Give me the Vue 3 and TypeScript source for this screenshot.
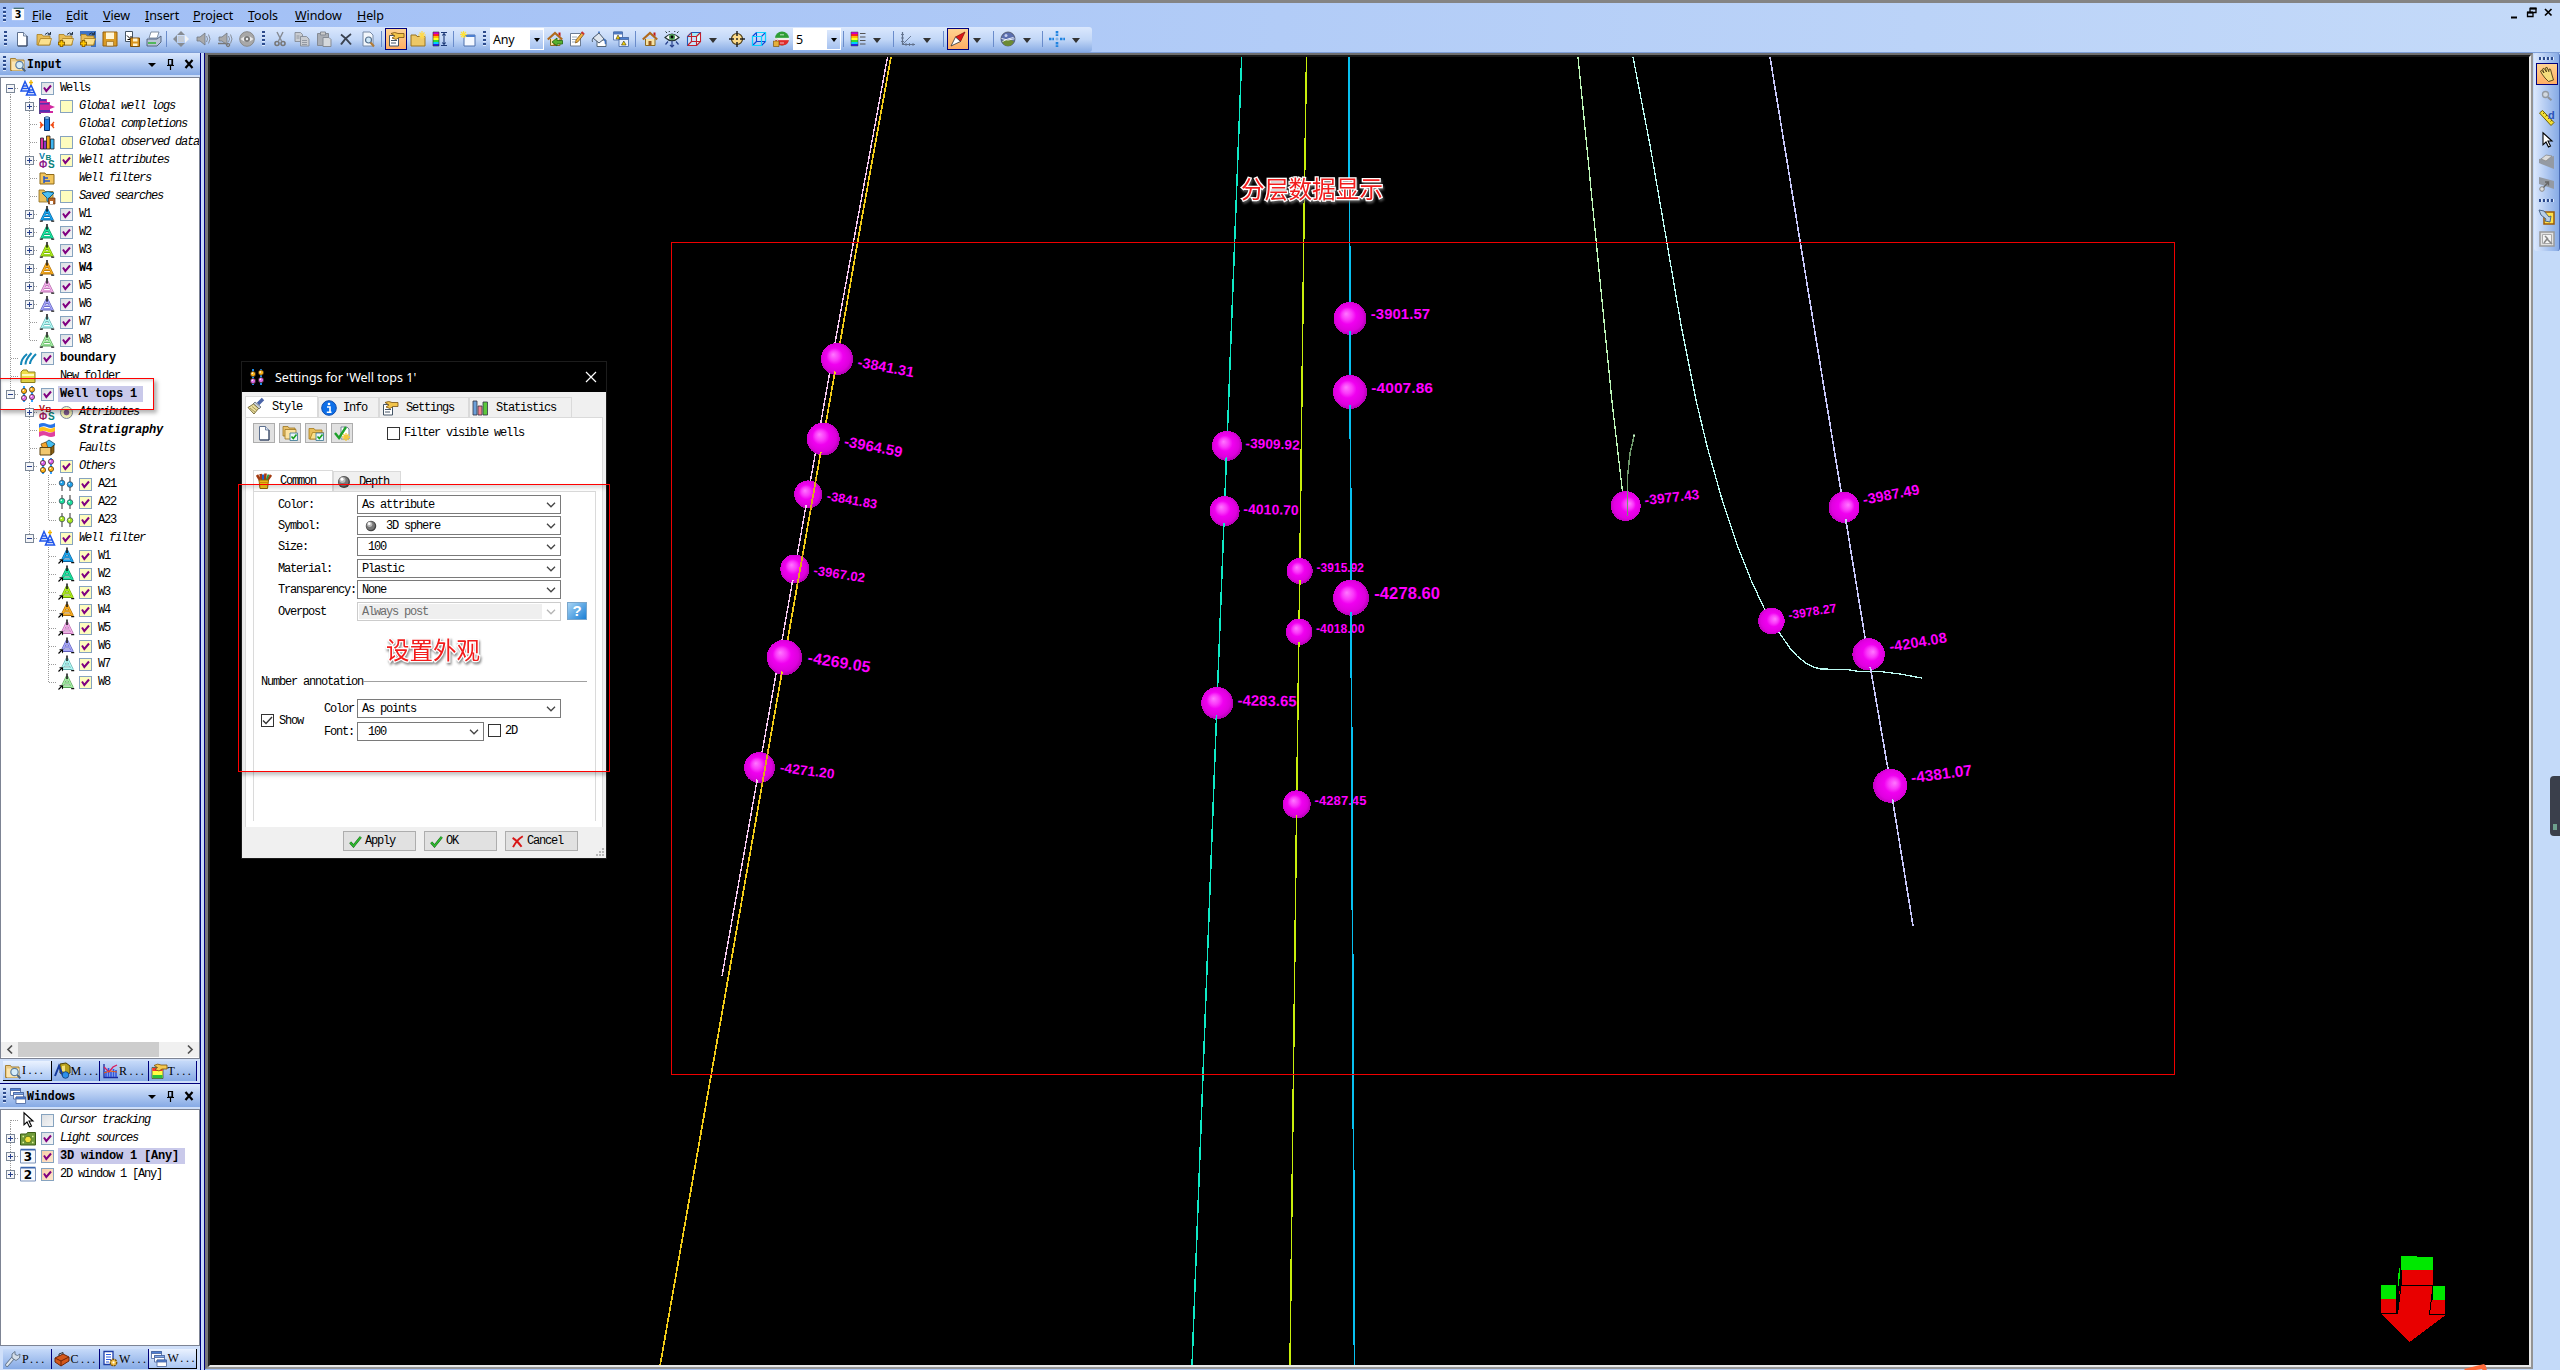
<script setup lang="ts">
interface ToolItem {
  kind: 'icon' | 'sep' | 'grip' | 'drop' | 'combo' | 'gap'
  icon?: string
  w: number
  on?: boolean
  text?: string
}
interface TreeNode {
  label: string
  icon: string
  box?: 'grey' | 'yellow' | 'peach' | 'radio'
  checked?: boolean
  exp?: '+' | '-'
  style?: string
  selected?: boolean
  children?: TreeNode[]
}
interface Row extends TreeNode {
  depth: number
  guides: string[]
}

const rig = (c: string, d: string) =>
  `<path d="M8 3L2.300 14.500M8 3l5.700 11.500" stroke="${d}" stroke-width="2.400" fill="none"/><path d="M6 6.800h4M4.800 9.900h6.400M3 13.200h10" stroke="${d}" stroke-width="2.400"/><path d="M8 3L2.500 14.200M8 3l5.500 11.200" stroke="${c}" stroke-width="1.300" fill="none"/><path d="M6 6.500h4M4.800 9.600h6.400M3.300 12.900h9.400" stroke="${c}" stroke-width="1.400"/><path d="M8 0v5.500" stroke="#111" stroke-width="1.500"/><path d="M.8 15.200h3M12.200 15.200h3" stroke="#111" stroke-width="1.300"/>`
const link = `<path d="M.5 15.500L4 12M1.500 11.800h3v3" stroke="#000" stroke-width="1.100" fill="none"/>`
const rigLink = (c: string, d: string) => `<g transform="translate(1 -.5)">${rig(c, d)}</g><path d="M0 11h4.500v5H0z" fill="#fff"/>${link}`
const pins = (c: string) =>
  `<path d="M4 1v14M12 1v14" stroke="#777" stroke-width="1.500"/><circle cx="4" cy="7" r="2.800" fill="${c}" stroke="#345" stroke-width=".7"/><circle cx="12" cy="8.500" r="2.800" fill="${c}" stroke="#345" stroke-width=".7"/><circle cx="3.300" cy="6.200" r=".8" fill="#fff"/><circle cx="11.300" cy="7.700" r=".8" fill="#fff"/>`
const tops = (a: string, b: string) =>
  `<path d="M4 0v16M12 0v16" stroke="#29f" stroke-width="1.800"/><g stroke="#321" stroke-width=".7"><circle cx="4" cy="5" r="2.600" fill="${a}"/><circle cx="12" cy="3.600" r="2.600" fill="${a}"/><circle cx="4" cy="12" r="2.600" fill="${b}"/><circle cx="12" cy="11" r="2.600" fill="${b}"/></g><g fill="#fff"><circle cx="3.300" cy="4.300" r=".8"/><circle cx="11.300" cy="3" r=".8"/><circle cx="3.300" cy="11.300" r=".8"/><circle cx="11.300" cy="10.300" r=".8"/></g>`
const folder = `<path d="M1 3.500h5l1 1.500h7v9H1z" fill="#e8bd57" stroke="#a77c1c" stroke-width=".8"/><path d="M2 14l2.500-6.500H15.500L13.500 14z" fill="#fbe08c" stroke="#a77c1c" stroke-width=".8"/>`
const page = `<path d="M3.500 1.500h6l3.500 3.500v10h-9.500z" fill="#fff" stroke="#5c6f8e"/><path d="M9.500 1.500V5H13" fill="#d8e2f2" stroke="#5c6f8e" stroke-width=".8"/><path d="M13 5v10H4" stroke="#34435f" fill="none"/>`
const plus = `<path d="M3.500 9v7M0 12.500h7" stroke="#7a5200" stroke-width="3.400"/><path d="M3.500 9.700v5.600M.8 12.500h5.400" stroke="#ffc800" stroke-width="1.800"/>`
const arc = `<path d="M9 3.500Q11.500.5 14 3M14.500 1v2.700h-2.700" fill="none" stroke="#234" stroke-width="1"/>`
const home = `<path d="M3.500 8v6.500h9.500V8" fill="#f6e2a4" stroke="#8a6a20"/><path d="M.8 8.500L8 2l7.200 6.500" fill="none" stroke="#b06a1c" stroke-width="2.200"/><path d="M11.500 1.500h2v4l-2-1.800z" fill="#c01818"/><path d="M6.500 10h3v4.500h-3z" fill="#9a5a1c"/>`
const speaker = `<path d="M2 6h3l5-4v12L5 10H2z" fill="#aaa" stroke="#6f7680" stroke-width=".8"/><path d="M11.500 5q2 3 0 6M13.500 3.500q3 4.500 0 9" fill="none" stroke="#80868e" stroke-width=".9"/>`
const sphere = `<circle cx="8" cy="8" r="6" fill="#444"/><circle cx="7.500" cy="7.500" r="5" fill="#777"/><circle cx="6.500" cy="6" r="3" fill="#bbb"/><circle cx="6" cy="5.300" r="1.500" fill="#fff"/>`
const attrs = (a: string, b: string, c: string) =>
  `<g font-family="Liberation Sans" font-weight="bold"><text x="0" y="6.800" font-size="9" fill="${a}">V</text><text x="6.500" y="7.500" font-size="8" fill="${b}">B</text><text x="0" y="15.800" font-size="10" fill="${c}">Φ</text><text x="9" y="15.800" font-size="10" fill="#087f7a">S</text></g>`
const windows3 = `<g stroke="#46629c" stroke-width=".8"><path d="M.5.5h10v7H.5z" fill="#fff"/><path d="M.5.500h10v2H.5z" fill="#4d7fd6"/><path d="M3.500 4.500h10v6.500h-10z" fill="#fff"/><path d="M3.500 4.500h10v2h-10z" fill="#7fa6e6"/><path d="M6 9h9.500v6.500H6z" fill="#fff"/><path d="M6 9h9.500v2H6z" fill="#4d7fd6"/></g>`
const spectrum = (x: number, w: number) =>
  ['#c0c', '#f22', '#fb0', '#ff2', '#3d3', '#0cf', '#22e'].map((c, i) => `<rect x="${x}" y="${1 + i * 2}" width="${w}" height="2" fill="${c}"/>`).join('')
const props = `<path d="M1.500 4.500h9v10.500h-9z" fill="#fff" stroke="#456"/><path d="M3 9.500h6M3 12h5" stroke="#456"/><path d="M3 2.500q4-2 7 0h6v4h-5l-3 2-4-1.500 3-2z" fill="#f2c44a" stroke="#7a5010" stroke-width=".8"/>`
const okShield = `<path d="M8 8h7.500v7.500H8z" fill="#e8f4fa" stroke="#48809a" stroke-width=".9"/><path d="M9.500 11.500l1.800 2L14.500 9.500" stroke="#19a01d" stroke-width="1.600" fill="none"/>`
const box = (n: string) => `<path d="M.5 2h15v13H.5z" fill="#f6f9fe" stroke="#7d93bb"/><path d="M.5 1.500h15" stroke="#3a66b0" stroke-width="1.500"/><text x="8" y="13" text-anchor="middle" font-family="DejaVu Sans" font-weight="bold" font-size="12" fill="#000">${n}</text>`
const cube = (c: string) => `<path d="M1.500 5.500h9v9h-9zM5.500 1.500h9v9h-9zM1.500 5.500l4-4M10.500 5.500l4-4M1.500 14.500l4-4M10.500 14.500l4-4" fill="none" stroke="${c}" stroke-width="1.100"/>`

const icons: Record<string, string> = {
  app: `<path d="M1 2h14v13H1z" fill="#fbfbfb"/><path d="M3 1.500h12" stroke="#47706f" stroke-width="1.500"/><text x="8" y="13" text-anchor="middle" font-family="DejaVu Sans" font-weight="bold" font-size="11">3</text>`,
  page,
  folder: folder + arc,
  folderPlus: folder + arc + plus,
  folderBlue: `<path d="M0 0h16v5H0zM11 5h5v11h-5z" fill="#3e73c5"/>` + folder + arc + plus,
  save: `<path d="M1 1h14v14H1z" fill="#d99a25" stroke="#935f0c"/><path d="M4 1.500h8V8H4z" fill="#fff6d8"/><path d="M4.500 10.500h7V15h-7z" fill="#f4e6c0" stroke="#935f0c" stroke-width=".6"/>`,
  exportIcon: `<path d="M1.500.5h7v10h-7z" fill="#fff" stroke="#456"/><path d="M3 4.500l4 4M7 5v3.500H3.500" stroke="#000" fill="none"/><path d="M6.500 7h9v8.500h-9z" fill="#d9941e" stroke="#7c4d07"/><path d="M9 7.500h4.500v3H9zM9 12.500h4.500V15H9z" fill="#fff3d0"/>`,
  print: `<path d="M5 1h8l-2 6H3z" fill="#fff" stroke="#68788e" stroke-width=".8"/><path d="M1 8h10l4-3v6l-4 4H1z" fill="#b9c5d6" stroke="#4a5a74" stroke-width=".9"/><path d="M2 12h8" stroke="#2fb233" stroke-width="1.500"/>`,
  arrows: `<path d="M8 0l4 4H4zM8 16l4-4H4zM0 8l4-4v8z" fill="#868b92"/><path d="M16 8l-4-4v8z" fill="#f1f3f5"/><path d="M5 5h6v6H5z" fill="#c3cbd6"/>`,
  speaker,
  speaker2: speaker + `<path d="M1 12.500h8M11 12.500a1.500 1.500 0 1 0 .1 0" stroke="#777" stroke-width="1.400" fill="none"/>`,
  disc: `<circle cx="8" cy="8" r="7.300" fill="#a8a8a8" stroke="#888"/><path d="M1.500 8Q8 2 14.500 8 8 14 1.500 8z" fill="#e8e8e8"/><circle cx="8" cy="8" r="3" fill="#777"/><circle cx="8" cy="8" r="1.200" fill="#eee"/>`,
  cut: `<path d="M5 1l4.500 9M11 1L6.500 10" stroke="#858a92" stroke-width="1.400"/><g fill="none" stroke="#777" stroke-width="1.600"><circle cx="5" cy="12.500" r="2"/><circle cx="11" cy="12.500" r="2"/></g>`,
  copy: `<g fill="#c9ccd1" stroke="#858b95" stroke-width=".9"><path d="M1 1.500h5.500l2 2v7H1z"/><path d="M6.500 5.500h6l2.500 2.500v7H6.500z"/></g><path d="M8 9.500h5M8 11.500h5M8 13.500h5M2.500 5h3M2.500 7h3" stroke="#858b95" stroke-width=".8"/>`,
  paste: `<path d="M1.500 2.500h11v12h-11z" fill="#a9adb4" stroke="#858b95"/><path d="M4.500 1h5v3h-5z" fill="#ccc" stroke="#858b95"/><path d="M7 6.500h6l2 2v7H7z" fill="#d5d8dc" stroke="#858b95"/>`,
  del: `<path d="M3 3.500Q8 7 13 13.500M13 3Q7 7 3 13.500" stroke="#3a4250" stroke-width="1.900" fill="none"/>`,
  preview: `<path d="M3 1h7l3 3v11H3z" fill="#f2f6fb" stroke="#778aa6"/><circle cx="8.500" cy="9" r="3" fill="#cfe8f8" stroke="#55708e" stroke-width="1.200"/><path d="M10.500 11.500l3.500 4" stroke="#b07a36" stroke-width="2"/>`,
  props,
  folderStar: `<path d="M1 4h5l1 1.500h8V15H1z" fill="#edc866" stroke="#9a7420"/><path d="M12 0v8M8 4h8M9.500 1.500l5 5M14.500 1.500l-5 5" stroke="#ffd94a" stroke-width="1.200"/>`,
  colorbar: spectrum(1, 6) + `<path d="M1 1h6v14H1z" fill="none" stroke="#333" stroke-width=".6"/><path d="M12 2v12M9 1.500h6M9 14.500h6M10.300 4.500L12 2.500l1.700 2M10.300 11.500l1.700 2 1.700-2" stroke="#1d3a78" fill="none" stroke-width="1.100"/>`,
  newWindow: `<path d="M4 4h11v11H4z" fill="#f4f8ff" stroke="#4f70ac"/><path d="M4 4h11v2H4z" fill="#4c7fd0"/><path d="M3.500 0v7M0 3.500h7M1 1l5 5M6 1L1 6" stroke="#ffe23d" stroke-width="1.200"/>`,
  homeBack: home + `<path d="M5 11l5-4v2.500h5.500v3.500H10V15z" fill="#58b02e" stroke="#22650f" stroke-width=".8"/>`,
  edit: `<path d="M1.500 2.500h10V15h-10z" fill="#fff" stroke="#6d7c93"/><path d="M3 6h5M3 8.500h4M3 11h3" stroke="#9ab"/><path d="M6.500 12l.5-3L13 1.500l2 1.800L9 10.800z" fill="#f1b648" stroke="#7c5313" stroke-width=".8"/><path d="M12.500 1l2.500 2.200" stroke="#c33" stroke-width="2"/>`,
  bucket: `<path d="M6 9h9v6.500H6z" fill="#fff" stroke="#567"/><path d="M2 7l6-5 5 6-5 4z" fill="#dfe6ee" stroke="#4b5a6e"/><path d="M8 2V.5M13 8q2 2 1.500 5" stroke="#3b6fc0" stroke-width="1.600" fill="none"/><path d="M2 7q-1.500 2-.5 4" stroke="#567" fill="none"/>`,
  paneCopy: `<g stroke="#4f70ac" stroke-width=".9"><path d="M.5 1h9v8h-9z" fill="#fff"/><path d="M.5 1h9v2h-9z" fill="#4c7fd0"/><path d="M6 6.500h9.500v9H6z" fill="#eaf0fa"/><path d="M6 6.500h9.500v2H6z" fill="#4c7fd0"/></g><path d="M3 8l2-4 2 4zM8.500 14l2.300-4 2.300 4z" fill="#ffd800" stroke="#332" stroke-width=".6"/>`,
  home,
  eye: `<path d="M1 6.500Q8-.5 15 6.500 8 13 1 6.500z" fill="#fff" stroke="#233" stroke-width="1.100"/><circle cx="8" cy="6" r="3" fill="#4a9b52"/><circle cx="8" cy="6" r="1.400" fill="#000"/><path d="M3 2L1.500.500M13 2l1.500-1.500M5.500 1L5 0M10.500 1L11 0" stroke="#233"/><path d="M8 10v6M4 10.500l-2.500 3M12 10.500l2.500 3M6 14l2 2 2-2" stroke="#27408b" fill="none" stroke-width="1.200"/>`,
  cubeRed: `<path d="M1.500 5.500l4-4h9l-4 4z" fill="#a6ecf7"/><path d="M1.500 5.500h9v9h-9z" fill="#c8e4fb"/><path d="M10.500 5.500l4-4v9l-4 4z" fill="#dff"/>` + cube('#c2202c') + `<path d="M5.500 1.500h9M1.500 5.500l4-4M1.500 5.500v9" stroke="#1d5fbb" fill="none"/>`,
  target: `<circle cx="8" cy="8" r="5.500" fill="#fbd98a" stroke="#4b3a12" stroke-width="1.200"/><path d="M8 0v5M8 11v5M0 8h5M11 8h5" stroke="#222" stroke-width="1.500"/><circle cx="8" cy="8" r="1" fill="#222"/>`,
  cubeCyan: cube('#0a46d8') + `<path d="M5.500 1.500h9v9M1.500 14.500v-9h9v9z" stroke="#0cd3ff" stroke-width="1.100" fill="none"/>`,
  globeLock: `<circle cx="9" cy="7.500" r="7" fill="#2e9e36"/><path d="M2 8h14q-.5 6.500-7 6.500T2 8z" fill="#df2b2b"/><path d="M2 7.300h14v1.400H2zM7 3.800h4M7 12h4" stroke="#fff" stroke-width=".7" fill="#fff"/><path d="M.5 10h5.500v5.500H.5z" fill="#e5b03a" stroke="#7c5510" stroke-width=".7"/><path d="M1.700 10V8.500q1.500-2 3 0V10" stroke="#ccc" fill="none"/>`,
  legend: spectrum(1, 7) + `<path d="M1 1h7v14H1z" fill="none" stroke="#444" stroke-width=".5"/><path d="M10 2.500h5.500M10 6h5.500M10 9.500h5.500M10 13h5.500" stroke="#555" stroke-width="1.200"/>`,
  axes: `<path d="M2.500 1v12.500H15" fill="none" stroke="#62728c" stroke-width="1.200"/><path d="M2.500 13.500L11 5M1 3.500h3M1 7h3M1 10.500h3M6 12v3M9.500 12v3M13 12v3" stroke="#62728c" stroke-width=".9"/>`,
  compass: `<path d="M15 1L5.500 6l5 4.500z" fill="#e01717" stroke="#7a0a0a" stroke-width=".7"/><path d="M1 15l4.500-9 5 4.500z" fill="#fff" stroke="#333" stroke-width=".8"/>`,
  globe: `<circle cx="8" cy="8" r="7" fill="#5b6fb0" stroke="#4a4f60" stroke-width=".8"/><path d="M2 10q5-2.500 12 0-1.500 5-6 5t-6-5z" fill="#6c8a33"/><path d="M1.500 7.500q6 3 13 .3M2.500 10.500q5-3 11-4" stroke="#e9eef8" fill="none"/><circle cx="6" cy="4.500" r="1.500" fill="#c5cff0"/>`,
  cross: `<path d="M8 0v5M8 11v5M0 8h5M11 8h5" stroke="#1f83e0" stroke-width="2.600" stroke-dasharray="2.500 .8"/><path d="M6.500 8h3M8 6.500v3" stroke="#6ea6df"/>`,
  wells: `<g fill="none" stroke="#1f55ea" stroke-width="1.500"><path d="M5 1.500L1 11h8.500zM3.500 6h3M2.500 8.500h5"/><path d="M11 5L6.500 15h9zM9.500 10h3.500M8.500 12.500h6"/></g><path d="M11 0v5M9 2.500h4" stroke="#f2b500" stroke-width="1.300"/>`,
  logs: `<path d="M1 0v16" stroke="#206" stroke-width="1.500"/><path d="M1 1h7v3h3v3l5 2-5 2v2h3v2H1z" fill="#d128a0"/><path d="M1 1h6v2H1zM1 5h9v1.500H1zM1 12h10v2.500H1z" fill="#5530b0"/>`,
  completions: `<path d="M5.500 1.500h5v13h-5z" fill="#1b7be0" stroke="#08306a"/><ellipse cx="8" cy="2" rx="2.500" ry="1.300" fill="#9cd2ff" stroke="#08306a" stroke-width=".7"/><path d="M4.500 9H1M1 6l2.500 3L1 12M11.500 9H15M15 6l-2.500 3 2.500 3" stroke="#f04a12" stroke-width="1.300" fill="none"/>`,
  bars: `<g stroke="#222" stroke-width=".8"><path d="M1.500 4h3v11h-3z" fill="#e0309f"/><path d="M4.500 7h3v8h-3z" fill="#8b30c8"/><path d="M7.500 2h3.500v13H7.500z" fill="#f2a21b"/><path d="M11.500 5h3.500v10h-3.500z" fill="#3fb6f2"/></g>`,
  attrs: attrs('#0a7fae', '#087f7a', '#8a1a8a'),
  attrsRed: attrs('#a01818', '#8a1020', '#9b1a5a'),
  filters: `<path d="M1 3h5l1 1.500h8V14H1z" fill="#f2c55c" stroke="#8d6a1c"/><path d="M5 6v7M5 8h4M5 11h6" stroke="#2456c8" stroke-width="1.500"/>`,
  searches: `<path d="M0 2h5l1 1.500h8V14H0z" fill="#eac05c" stroke="#8d6a1c" stroke-width=".8"/><path d="M3 5q5.500-3 12 0l-5 5v4l-2-1v-3z" fill="#4cc0f4" stroke="#10608e"/><path d="M9.500 10H16v6H9.500z" fill="#b8682a" stroke="#5b2f0c" stroke-width=".7"/><path d="M11 13h3v3h-3z" fill="#fff"/>`,
  boundary: `<path d="M1 15q0-6 6-11M5.500 14.500q0-5 6-11.500M10 14q0-4 6-10" stroke="#1387b8" stroke-width="2" fill="none"/>`,
  newFolder: `<path d="M1 4l2-2h4l1 2h7v10.500H1z" fill="#efdf4b" stroke="#8d801c"/><path d="M2 6h12v2H2z" fill="#fffbc0"/>`,
  tops: tops('#ffb51a', '#e06ee8'),
  topsAlt: tops('#d860e8', '#ffb51a'),
  strat: `<path d="M0 2q4-2 8 0t8-1v4q-4 2-8 0T0 6z" fill="#2874e8"/><path d="M0 6q4-2 8 0t8-1v4.500q-4 2-8 0t-8 1z" fill="#ffc21a"/><path d="M0 10q4-2 8 0t8-1v5q-4 2-8 0t-8 1z" fill="#e040a0"/>`,
  faults: `<path d="M3 5l7-5 6 4-4 5-8 1z" fill="#43bdf0" stroke="#0e4a6c" stroke-width=".8"/><path d="M2 4l5-2 2 6-5 1z" fill="#f5a52c" stroke="#6a430c" stroke-width=".7"/><path d="M1 7.500h11V15H1z" fill="#f1c870" stroke="#5c420f"/><path d="M12 7.500l3-2.500v7.500L12 15z" fill="#8a6014" stroke="#3c2a05" stroke-width=".7"/>`,
  cursor: `<path d="M4 .8v12l3-2.800 2.500 5 2-1L9 9h4z" fill="#fff" stroke="#000" stroke-width="1.100"/>`,
  light: `<path d="M.5 4h6l1-1.500h8V15H.5z" fill="#6f9a3a" stroke="#3c5d14"/><circle cx="8" cy="9.500" r="3.300" fill="#f4e23c" stroke="#4e6a12" stroke-width=".8"/><path d="M2.500 6.500h1.500M12 6.500h1.500M2.500 12.500h1.500M12 12.500h1.500" stroke="#e7f29a" stroke-width="1.300"/>`,
  box3: box('3'),
  box2: box('2'),
  panelInput: `<path d="M.5 2.500h5l1 1.500h7.500v10.500H.5z" fill="#eccb85" stroke="#a58136"/><path d="M2 5.500h12v9H2z" fill="#fbe6b2"/><circle cx="9.500" cy="9" r="3.700" fill="#d4ecfa" stroke="#5c7ea0" stroke-width="1.200"/><path d="M12.300 12l3 3.300" stroke="#4c6480" stroke-width="2"/>`,
  panelWindows: windows3,
  models: `<path d="M6 1l6-1 4 3v7l-5 2-5-2z" fill="#b7a01c" stroke="#4b4108"/><path d="M8 3l3-.5V9L8 8z" fill="#f4e27a"/><path d="M1 13L5 3l4 10" stroke="#153a9c" stroke-width="2" fill="none"/><circle cx="11.500" cy="12" r="3.300" fill="#2e8fe8" stroke="#0b3a78" stroke-width=".8"/>`,
  results: `<path d="M2 1v13.500H16" stroke="#1b2a9c" stroke-width="1.300" fill="none"/><path d="M4 14V8M6.500 14V5M9 14V9M11.500 14V6M14 14V7" stroke="#3355dd" stroke-width="1.600"/><path d="M2 4l5 5 4-5 4-2" stroke="#d81c5c" stroke-width="1.300" fill="none"/><path d="M2 10l6-2 7 1" stroke="#e85a10" fill="none"/>`,
  templates: `<path d="M1 4.500h11V15.500H1z" fill="#ff4" stroke="#333" stroke-width=".7"/><path d="M1.400 5h10.200v3H1.400z" fill="#f33"/><path d="M1.400 12h10.200v3.200H1.400z" fill="#2cc13a"/><path d="M3 2.500q4-2.500 7-.5h6v4h-5l-3 2-4-1.500 2.500-2z" fill="#f4c850" stroke="#7a5010" stroke-width=".8"/>`,
  wrench: `<path d="M2 14l6-7" stroke="#5f7186" stroke-width="3.600" stroke-linecap="round"/><path d="M2 14l6-7" stroke="#dfe7ef" stroke-width="2" stroke-linecap="round"/><path d="M7 7V3l3-2.500v3l2.500 1 2.500-1.500-.5 4-3.500 2.500z" fill="#d3dde8" stroke="#5f7186" stroke-width=".9"/>`,
  toolbox: `<path d="M1 7l8-4 6 3v4l-8 5-6-4z" fill="#d4581c" stroke="#702406"/><path d="M1 7l6 3 8-4M7 10v5" stroke="#702406" fill="none"/><path d="M5 5V3l4-1.500V3" stroke="#333" fill="none"/>`,
  workflow: `<path d="M2 .5h9v13H2z" fill="#fff" stroke="#1c3da6" stroke-width="1.300"/><path d="M4 3.500h5M4 6h5M4 8.500h5M4 11h3" stroke="#2a5be0" stroke-width="1.200"/><circle cx="11.500" cy="11.500" r="3.200" fill="#f6c44a" stroke="#7d560c" stroke-width="1.400" stroke-dasharray="2 .7"/><circle cx="11.500" cy="11.500" r="1" fill="#fff"/>`,
  brush: `<path d="M15 0l-5 5" stroke="#4a64a8" stroke-width="3.400"/><path d="M7 3l6 5-2 2-6-5z" fill="#c5ccd6" stroke="#5c6674" stroke-width=".8"/><path d="M5.500 5L0 8.500l6 6.500 4.500-5.500z" fill="#ecdfa0" stroke="#6e6330" stroke-width=".9"/><path d="M2 9l5 4M4 7.500l5 4" stroke="#87793a" stroke-width=".7"/>`,
  info: `<circle cx="8" cy="8" r="7.300" fill="#0d6fe8" stroke="#0b4cb0"/><circle cx="8" cy="4" r="1.300" fill="#fff"/><path d="M6 7h3v5M5.800 12.300h4.700" stroke="#fff" stroke-width="1.600" fill="none"/>`,
  stats: `<g stroke="#334" stroke-width=".8"><path d="M1 1h4v14H1z" fill="#6b9fd8"/><path d="M6 6h4v9H6z" fill="#f0808c"/><path d="M11 2h4.500v13H11z" fill="#5cc83c"/></g>`,
  foldersOk: `<path d="M1 1.500h5l1 1.500h6v8H1z" fill="#e9c068" stroke="#9a7420" stroke-width=".8"/><path d="M3 4.500h11V14H3z" fill="#fbe2a0" stroke="#9a7420" stroke-width=".8"/>` + okShield,
  folderOk: folder + okShield,
  checkStar: `<path d="M7 2h6l2 2v10H7z" fill="#fff" stroke="#789"/><path d="M1 8l4 5L12 2" stroke="#1da02a" stroke-width="2.400" fill="none"/><path d="M12 8v8M8 12h8M9.300 9.300l5.400 5.400M14.700 9.300l-5.400 5.400" stroke="#f4c83c" stroke-width="1.300"/>`,
  common: `<path d="M4 7L1 2M6 7L4.500 1M9 7l.5-6.500M11.500 7L15 2" stroke="#a33a10" stroke-width="2.600"/><path d="M7 7V1.500" stroke="#2060c8" stroke-width="2"/><path d="M10.500 7L12.500 1.500" stroke="#289a3c" stroke-width="1.800"/><path d="M3 7h9.500l-1 8.500H4z" fill="#f4c61e" stroke="#8a5c05"/><path d="M3.300 9.500h8.800" stroke="#c98a08" stroke-width="1.500"/>`,
  sphere,
  tick: `<path d="M1.500 9l4 4.500L14.500 2.500" stroke="#14641a" stroke-width="3.200" fill="none"/><path d="M1.500 9l4 4.500L14.500 2.500" stroke="#2fbb2f" stroke-width="2" fill="none"/>`,
  redx: `<path d="M2 3.500Q8 7 13 14.500M14.500 1.500Q7 6 2.500 15" stroke="#d81717" stroke-width="2.400" fill="none"/>`,
  hand: `<path d="M3 8L1.500 5l1.300-.8L5 7 3.500 3l1.400-.8L7.500 6 6.500 1.800 8 1.300 9.800 5.700 10 3l1.500.3L13 9l1.500 5-5 1.500L6 12z" fill="#f5dd7c" stroke="#4e3d14" stroke-width=".9"/>`,
  zoomGrey: `<circle cx="6.500" cy="6.500" r="3" fill="#d2d8df" stroke="#9299a3" stroke-width="1.300"/><path d="M9 9.200l3.500 3" stroke="#8c9199" stroke-width="2"/>`,
  ruler: `<path d="M.5 3l3-2.500L15 12.500l-3 3z" fill="#f6df35" stroke="#6b5e08"/><path d="M4 4l1.500-1.500M6.500 6.500L8 5M9 9l1.500-1.500M11.500 11.500L13 10" stroke="#6b5e08"/><text x="9" y="8.500" font-family="Liberation Sans" font-weight="bold" font-size="11" fill="#2b52b8">d</text>`,
  planeGrey: `<path d="M0 5l15-3v13L0 9z" fill="#949aa3"/><path d="M2 5l5-4 6 1-6 5z" fill="#dcdcdc" stroke="#8a8a8a" stroke-width=".8"/>`,
  planeGrey2: `<path d="M0 1l15 4v8L0 8z" fill="#949aa3"/><circle cx="3" cy="13" r="2.300" fill="#ddd" stroke="#888"/><path d="M4.500 11.500L9 6.500M6 6h3.500v3.500" stroke="#666" stroke-width="1.300" fill="none"/>`,
  wellEdit: `<path d="M5 3h10v12H5z" fill="#ffe04a" stroke="#9a5a08" stroke-width="1.500"/><path d="M0 1l5 1 5 6 2-1-1 6-5-1 1-2-5-4z" fill="#b9cfe6" stroke="#3d5a80" stroke-width=".9"/>`,
  frameGrey: `<path d="M1 1h14v14H1z" fill="#e2e2e2" stroke="#999" stroke-width="1.500"/><path d="M3.500 3.500h9v9h-9z" fill="#f4f4f4" stroke="#aaa"/><path d="M5 12l3-4 5 5M6 5l3 3" stroke="#888" stroke-width="1.500" fill="none"/>`,
}
const rigColors: [string, string][] = [
  ['#1aa8f0', '#0a5f9c'], ['#1ce8a4', '#0a8a60'], ['#b0f01c', '#6a9a08'], ['#fab022', '#a86a08'],
  ['#f4b0ea', '#b068a8'], ['#a8a8fa', '#5c5cb8'], ['#b4faf6', '#5ca8a8'], ['#a8f0a8', '#58a058'],
]
rigColors.forEach(([c, d], i) => {
  icons['rig' + i] = rig(c, d)
  icons['rigLink' + i] = rigLink(c, d)
})
;['#1f9fe8', '#1edc9c', '#a8e61c'].forEach((c, i) => (icons['pins' + i] = pins(c)))

const i = (icon: string, on = false): ToolItem => ({ kind: 'icon', icon, w: 22, on })
const k = (kind: ToolItem['kind'], w: number, text?: string): ToolItem => ({ kind, w, text })
const toolbar: ToolItem[] = [
  k('grip', 10.5), i('page'), i('folder'), i('folderPlus'), i('folderBlue'), i('save'), i('exportIcon'), i('print'), k('sep', 5),
  i('arrows'), i('speaker'), i('speaker2'), i('disc'), k('grip', 11), i('cut'), i('copy'), i('paste'), i('del'), i('preview'), k('sep', 6.5),
  i('props', true), i('folderStar'), i('colorbar'), k('sep', 6), i('newWindow'), k('grip', 11), k('combo', 54, 'Any'),
  i('homeBack'), i('edit'), i('bucket'), i('paneCopy'), k('sep', 7), i('home'), i('eye'), i('cubeRed'), k('drop', 15), k('gap', 6),
  i('target'), i('cubeCyan'), i('globeLock'), k('gap', 1), k('combo', 48, '5'), k('sep', 6), i('legend'), k('drop', 16), k('sep', 12),
  i('axes'), k('drop', 15), k('sep', 13), i('compass', true), k('drop', 15), k('sep', 13), i('globe'), k('drop', 15), k('sep', 12), i('cross'), k('drop', 16), k('gap', 8),
]
const menus: [string, string, number][] = [
  ['F', 'ile', 34], ['E', 'dit', 37], ['V', 'iew', 42], ['I', 'nsert', 48], ['P', 'roject', 55], ['T', 'ools', 47], ['W', 'indow', 62], ['H', 'elp', 40],
]

const wellNames = ['W1', 'W2', 'W3', 'W4', 'W5', 'W6', 'W7', 'W8']
const inputTree: TreeNode[] = [
  {
    label: 'Wells', icon: 'wells', box: 'grey', checked: true, exp: '-', children: [
      { label: 'Global well logs', icon: 'logs', box: 'yellow', exp: '+', style: 'it' },
      { label: 'Global completions', icon: 'completions', style: 'it' },
      { label: 'Global observed data', icon: 'bars', box: 'yellow', style: 'it' },
      { label: 'Well attributes', icon: 'attrs', box: 'yellow', checked: true, exp: '+', style: 'it' },
      { label: 'Well filters', icon: 'filters', style: 'it' },
      { label: 'Saved searches', icon: 'searches', box: 'yellow', style: 'it' },
      ...wellNames.map((label, n): TreeNode => ({ label, icon: 'rig' + n, box: 'grey', checked: true, exp: n < 6 ? '+' : undefined, style: n === 3 ? 'bd tight' : '' })),
    ],
  },
  { label: 'boundary', icon: 'boundary', box: 'grey', checked: true, style: 'bd' },
  { label: 'New folder', icon: 'newFolder' },
  {
    label: 'Well tops 1', icon: 'tops', box: 'grey', checked: true, exp: '-', style: 'bd', selected: true, children: [
      { label: 'Attributes', icon: 'attrsRed', box: 'radio', exp: '+', style: 'it' },
      { label: 'Stratigraphy', icon: 'strat', style: 'it bd' },
      { label: 'Faults', icon: 'faults', style: 'it' },
      {
        label: 'Others', icon: 'topsAlt', box: 'yellow', checked: true, exp: '-', style: 'it',
        children: ['A21', 'A22', 'A23'].map((label, n): TreeNode => ({ label, icon: 'pins' + n, box: 'yellow', checked: true })),
      },
      {
        label: 'Well filter', icon: 'wells', box: 'yellow', checked: true, exp: '-', style: 'it',
        children: wellNames.map((label, n): TreeNode => ({ label, icon: 'rigLink' + n, box: 'yellow', checked: true })),
      },
    ],
  },
]
const windowTree: TreeNode[] = [
  { label: 'Cursor tracking', icon: 'cursor', box: 'grey', style: 'it' },
  { label: 'Light sources', icon: 'light', box: 'grey', checked: true, exp: '+', style: 'it' },
  { label: '3D window 1 [Any]', icon: 'box3', box: 'peach', checked: true, exp: '+', style: 'bd', selected: true },
  { label: '2D window 1 [Any]', icon: 'box2', box: 'peach', checked: true, exp: '+' },
]
function flatten(nodes: TreeNode[], depth = 0, parents: string[] = []): Row[] {
  return nodes.flatMap((node, n) => {
    const last = n === nodes.length - 1
    const first = depth === 0 && n === 0
    const own = last ? 'upper' : first ? 'lower' : 'full'
    const row: Row = { ...node, depth, guides: [...parents, own] }
    return [row, ...flatten(node.children ?? [], depth + 1, [...parents, last ? 'none' : 'full'])]
  })
}
const panels = [
  {
    id: 'input', title: 'Input', icon: 'panelInput', rows: flatten(inputTree), scroll: true, active: 0,
    tabs: [['panelInput', 'I...'], ['models', 'M...'], ['results', 'R...'], ['templates', 'T...']],
  },
  {
    id: 'windows', title: 'Windows', icon: 'panelWindows', rows: flatten(windowTree), scroll: false, active: 3,
    tabs: [['wrench', 'P...'], ['toolbox', 'C...'], ['workflow', 'W...'], ['panelWindows', 'W...']],
  },
]

type Pt = [number, number]
interface Path { color: string; pts: Pt[]; width: number }
const paths: Record<string, Path> = {
  w5: { color: '#f4c8ee', width: 1.4, pts: [[887.5, 57], [857.5, 220], [835, 343], [750, 820], [722, 976]] },
  w4: { color: '#f2cc18', width: 1.7, pts: [[891, 57], [861.5, 220], [840, 343], [762.5, 782.6], [660, 1366]] },
  w2: { color: '#0feac6', width: 1.5, pts: [[1241.7, 57], [1235.5, 220], [1227.5, 430], [1217, 703], [1212.6, 820], [1192, 1366]] },
  w3: { color: '#c8ee0c', width: 1.5, pts: [[1306.5, 57], [1304, 220], [1299.9, 564], [1296.8, 790], [1290, 1366]] },
  w1: { color: '#08c0f0', width: 1.8, pts: [[1349, 57], [1349.5, 220], [1351, 580], [1352, 820], [1354.5, 1366]] },
  w8: { color: '#bcf6b8', width: 1.3, pts: [[1578, 57], [1611.8, 400], [1622.4, 491], [1625, 508]] },
  w7: { color: '#bcfaf2', width: 1.3, pts: [[1633, 57], [1650, 145], [1667, 243], [1681, 325], [1696, 400], [1707, 446], [1721, 496], [1737.5, 546], [1751, 580], [1764, 608], [1771, 620], [1778.8, 632], [1790.6, 649], [1797, 656], [1805, 662.5], [1813, 667], [1821, 669], [1848, 669.6], [1858, 671.4], [1882.4, 671.8], [1900, 674], [1922.4, 678.2]] },
  w6: { color: '#c8c8fa', width: 1.6, pts: [[1770, 57], [1826, 400], [1841, 491], [1846, 521], [1865, 637.5], [1870.6, 668.6], [1887.8, 768], [1892.7, 800.7], [1913, 925.7]] },
}
const poly = (p: Pt[]) => p.map((q) => q.join(',')).join(' ')
function xAt(p: Pt[], y: number): number {
  for (let n = 1; n < p.length; n++) {
    const [x0, y0] = p[n - 1]
    const [x1, y1] = p[n]
    if (y <= y1) return x0 + ((x1 - x0) * (y - y0)) / (y1 - y0)
  }
  return p[p.length - 1][0]
}
interface Marker { x: number; y: number; r: number; well: string; text: string; from: Pt; to: Pt }
const m = (x: number, y: number, r: number, well: string, text: string, x0: number, y0: number, x1: number, y1: number): Marker =>
  ({ x, y, r, well, text, from: [x0, y0], to: [x1, y1] })
const markers: Marker[] = [
  m(837, 359, 16, 'w4', '-3841.31', 858, 361.6, 914, 372),
  m(823.2, 439, 16.5, 'w4', '-3964.59', 844.5, 440.8, 902.3, 452),
  m(808.2, 494.4, 14, 'w5', '-3841.83', 827, 495.5, 877, 504.3),
  m(794.8, 569, 14.5, 'w5', '-3967.02', 813.7, 569.8, 865, 577.8),
  m(784.4, 657.4, 17.7, 'w4', '-4269.05', 808, 657, 870.4, 667),
  m(759.5, 767.6, 15.5, 'w5', '-4271.20', 780, 767, 834.4, 773.8),
  m(1227, 445.8, 15, 'w2', '-3909.92', 1245.5, 443, 1299.7, 444.8),
  m(1224.6, 511.2, 15, 'w2', '-4010.70', 1243.5, 508.6, 1298.7, 510),
  m(1217.2, 703, 16, 'w2', '-4283.65', 1237.5, 700, 1296.7, 701),
  m(1350, 318.4, 16.5, 'w1', '-3901.57', 1370.8, 314, 1430, 314),
  m(1350, 392, 17, 'w1', '-4007.86', 1371.3, 387.5, 1433, 387.5),
  m(1351, 597.7, 18, 'w1', '-4278.60', 1374.3, 592.6, 1440, 592.6),
  m(1299.7, 571, 13, 'w3', '-3915.92', 1316.6, 568, 1364, 568),
  m(1299.2, 631.8, 13.3, 'w3', '-4018.00', 1316, 628.6, 1364.4, 628.6),
  m(1296.7, 804.4, 14, 'w3', '-4287.45', 1314.6, 800.7, 1366.4, 800.7),
  m(1625.7, 506, 15, 'w8', '-3977.43', 1644.5, 500, 1699.2, 494),
  m(1844, 507.3, 15.5, 'w6', '-3987.49', 1862.9, 499.5, 1919.2, 489),
  m(1771.4, 621, 13.3, 'w7', '-3978.27', 1788.2, 615, 1836.3, 607.5),
  m(1868.6, 654.3, 16.2, 'w6', '-4204.08', 1889.4, 646.6, 1946.5, 637),
  m(1890.2, 785.7, 17, 'w6', '-4381.07', 1911, 777.6, 1971.8, 769.5),
]
const len = (a: Marker) => Math.hypot(a.to[0] - a.from[0], a.to[1] - a.from[1])
const turn = (a: Marker) => (Math.atan2(a.to[1] - a.from[1], a.to[0] - a.from[0]) * 180) / Math.PI
const crossing = (well: string, y0: number, y1: number): string => {
  const p = paths[well].pts
  return poly([[xAt(p, y0), y0], [xAt(p, y1), y1]])
}
const tails = markers.filter((a) => !['w8', 'w7'].includes(a.well)).map((a) => ({ color: paths[a.well].color, pts: crossing(a.well, a.y + a.r - 3.5, a.y + a.r + 1) }))
const overGold = [crossing('w4', 478, 512), crossing('w4', 553, 586), crossing('w4', 750, 785)]

const fields: { label: string; value: string; h: number; icon?: string; pad?: boolean; off?: boolean }[] = [
  { label: 'Color:', value: 'As attribute', h: 21 },
  { label: 'Symbol:', value: '3D sphere', h: 21, icon: 'sphere' },
  { label: 'Size:', value: '100', h: 22, pad: true },
  { label: 'Material:', value: 'Plastic', h: 21 },
  { label: 'Transparency:', value: 'None', h: 22 },
  { label: 'Overpost', value: 'Always post', h: 21, off: true },
]
const sideTools: { icon?: string; h: number; on?: boolean }[] = [
  { h: 10 }, { icon: 'hand', h: 22, on: true }, { icon: 'zoomGrey', h: 22 }, { icon: 'ruler', h: 22 }, { icon: 'cursor', h: 22 },
  { icon: 'planeGrey', h: 22 }, { icon: 'planeGrey2', h: 22 }, { h: 11 }, { icon: 'wellEdit', h: 22 }, { icon: 'frameGrey', h: 22 },
]
</script>

<template>
  <div class="app">
    <header class="menubar">
      <span class="grip"></span>
      <svg class="ic app-ic" viewBox="0 0 16 16" v-html="icons.app"></svg>
      <nav>
        <span v-for="mn in menus" :key="mn[0]" :style="{ width: mn[2] + 'px' }"><u>{{ mn[0] }}</u>{{ mn[1] }}</span>
      </nav>
      <svg class="winctl" width="48" height="16" viewBox="0 0 48 16">
        <path d="M2 11.500h6" stroke="#000" stroke-width="2" />
        <path d="M21 2.500h6v4h-6zM18.500 6.500h5.500v4h-5.500z" fill="none" stroke="#000" stroke-width="1.300" />
        <path d="M18 6.500h6M21 2.500h6.500" stroke="#000" stroke-width="2" />
        <path d="M36 3l6.500 6.500M42.500 3L36 9.500" stroke="#000" stroke-width="1.700" />
      </svg>
    </header>

    <div class="toolrow">
      <div class="toolbar">
        <div v-for="(t, n) in toolbar" :key="n" class="tool" :class="[t.kind, { on: t.on }]" :style="{ width: t.w + 'px' }">
          <svg v-if="t.kind === 'icon'" class="ic" viewBox="0 0 16 16" v-html="icons[t.icon!]"></svg>
          <span v-else-if="t.kind === 'grip'" class="dots"></span>
          <i v-else-if="t.kind === 'drop'" class="tri"></i>
          <template v-else-if="t.kind === 'combo'"><b>{{ t.text }}</b><em><i class="tri small"></i></em></template>
        </div>
      </div>
    </div>

    <main class="work">
      <aside class="left">
        <section v-for="p in panels" :key="p.id" class="panel" :class="p.id">
          <div class="phead">
            <span class="grip"></span>
            <svg class="ic" viewBox="0 0 16 16" v-html="icons[p.icon]"></svg>
            <strong>{{ p.title }}</strong>
            <svg class="pctl" width="48" height="14" viewBox="0 0 48 14">
              <path d="M0 6h8L4 10z" fill="#000" />
              <path d="M20.500 2.500h4v5.500h-4zM19 8.500h7M22.500 9v4M24 2.500V8" stroke="#000" stroke-width="1.200" fill="none" />
              <path d="M37.500 3l7 8M44.500 3l-7 8" stroke="#000" stroke-width="2.200" />
            </svg>
          </div>
          <div class="tree">
            <div class="rows">
              <div v-for="(r, n) in p.rows" :key="n" class="row">
                <span v-for="(g, l) in r.guides" :key="l" class="lead" :class="[g, { own: l === r.depth }]">
                  <span v-if="l === r.depth && r.exp" class="exp" :class="{ minus: r.exp === '-' }"></span>
                </span>
                <span class="slot"><svg class="ic" viewBox="0 0 16 16" v-html="icons[r.icon]"></svg></span>
                <span class="slot cbs">
                  <span v-if="r.box" class="cb" :class="r.box">
                    <svg v-if="r.checked" width="11" height="11" viewBox="0 0 11 11"><path d="M2 4.500l2.300 3.500L9 2.500" fill="none" stroke="#800080" stroke-width="2" /></svg>
                  </span>
                </span>
                <span class="label" :class="[r.style, { sel: r.selected }]">{{ r.label }}</span>
              </div>
            </div>
            <div v-if="p.scroll" class="hscroll">
              <svg width="17" height="15" viewBox="0 0 17 15"><path d="M11 3.500L7 7.500l4 4" fill="none" stroke="#505050" stroke-width="1.700" /></svg>
              <div class="thumb"></div>
              <svg width="17" height="15" viewBox="0 0 17 15"><path d="M6 3.500l4 4-4 4" fill="none" stroke="#505050" stroke-width="1.700" /></svg>
            </div>
          </div>
          <div class="ptabs">
            <div v-for="(t, n) in p.tabs" :key="n" class="ptab" :class="{ active: n === p.active }">
              <svg class="ic" viewBox="0 0 16 16" v-html="icons[t[0]]"></svg><span>{{ t[1] }}</span>
            </div>
          </div>
        </section>
        <div class="mark"></div>
      </aside>
      <div class="split"></div>

      <section class="view">
        <svg class="scene" viewBox="210 57 2319 1308" width="2319" height="1308">
          <defs>
            <radialGradient id="ballL" cx=".5" cy=".5" r=".62" fx=".38" fy=".36">
              <stop offset="0" stop-color="#ff78ff" /><stop offset=".25" stop-color="#fa38fa" /><stop offset=".42" stop-color="#f000f0" /><stop offset=".7" stop-color="#dc00dc" /><stop offset="1" stop-color="#840084" />
            </radialGradient>
            <radialGradient id="ballR" cx=".5" cy=".5" r=".62" fx=".64" fy=".42">
              <stop offset="0" stop-color="#ff78ff" /><stop offset=".25" stop-color="#fa38fa" /><stop offset=".42" stop-color="#f000f0" /><stop offset=".7" stop-color="#e000e0" /><stop offset="1" stop-color="#a000a0" />
            </radialGradient>
          </defs>
          <text
            v-for="a in markers" :key="a.text" class="depth" :font-size="len(a) / 3.98"
            :textLength="len(a)" :transform="`translate(${a.from[0]} ${a.from[1]}) rotate(${turn(a)})`" x="0" :y="len(a) / 11"
          >{{ a.text }}</text>
          <polyline v-for="(p, n) in paths" :key="n" class="crisp" :points="poly(p.pts)" :stroke="p.color" :stroke-width="p.width" fill="none" />
          <circle v-for="a in markers" :key="a.text" class="crisp" :cx="a.x" :cy="a.y" :r="a.r" :fill="a.x < 1500 ? 'url(#ballL)' : 'url(#ballR)'" />
          <polyline v-for="(t, n) in tails" :key="n" class="crisp" :points="t.pts" :stroke="t.color" stroke-width="1.800" fill="none" />
          <polyline v-for="t in overGold" :key="t" class="crisp" :points="t" stroke="#e0a81c" stroke-width="1.800" fill="none" />
          <path class="crisp" d="M1627.700 516V475L1630 453.600 1634 436" fill="none" stroke="#6f9a6c" stroke-width="1.500" />
          <path d="M1633 434.500h2v2h-2z" fill="#c8f8c8" />
          <rect x="671.500" y="242.500" width="1503" height="832" fill="none" stroke="#f00000" />
          <text class="caption" x="1241" y="197.500" textLength="142">分层数据显示</text>
          <g class="crisp">
            <path d="M2401 1256h16v1h16v14h-32zM2381 1285h15v14h-15zM2433 1286h12v14h-12zM2399.500 1268l-2 10v15l2.500-17z" fill="#00e800" />
            <path d="M2401 1270h32v16l-1 14h13v14l-.5 2L2409.500 1342 2382 1314l-1-2v-13h15v14h1.500l2.500-27h1z" fill="#e80000" />
            <path d="M2401 1285.500h32.500M2401 1270v16l-3.500 28M2381 1313.500h16M2433 1286l-3.500 28M2429 1314.500h16" fill="none" stroke="#000" />
          </g>
        </svg>

        <div class="dialog">
          <div class="dtitle">
            <svg class="ic" viewBox="0 0 16 16" v-html="icons.tops"></svg>
            <span>Settings for 'Well tops 1'</span>
            <svg class="dx" width="12" height="12" viewBox="0 0 12 12"><path d="M1 1l10 10M11 1L1 11" stroke="#fff" stroke-width="1.200" /></svg>
          </div>
          <div class="dtabs">
            <div class="dtab cur" style="width: 73px"><svg class="ic" viewBox="0 0 16 16" v-html="icons.brush"></svg><span>Style</span></div>
            <div class="dtab" style="width: 61px"><svg class="ic" viewBox="0 0 16 16" v-html="icons.info"></svg><span>Info</span></div>
            <div class="dtab wide" style="width: 90px"><svg class="ic" viewBox="0 0 16 16" v-html="icons.props"></svg><span>Settings</span></div>
            <div class="dtab wide" style="width: 103px"><svg class="ic" viewBox="0 0 16 16" v-html="icons.stats"></svg><span>Statistics</span></div>
          </div>
          <div class="page">
            <div class="btnrow">
              <div v-for="b in ['page', 'foldersOk', 'folderOk', 'checkStar']" :key="b" class="ibtn"><svg class="ic" viewBox="0 0 16 16" v-html="icons[b]"></svg></div>
              <span class="dcb"></span><span class="ft">Filter visible wells</span>
            </div>
            <div class="dtabs sub">
              <div class="dtab cur" style="width: 80px"><svg class="ic" viewBox="0 0 16 16" v-html="icons.common"></svg><span>Common</span></div>
              <div class="dtab" style="width: 68px"><svg class="ic sm" viewBox="0 0 16 16" v-html="icons.sphere"></svg><span>Depth</span></div>
            </div>
            <div class="subpage">
              <div v-for="f in fields" :key="f.label" class="field" :style="{ height: f.h + 'px' }">
                <label>{{ f.label }}</label>
                <div class="select" :class="{ off: f.off, pad: f.pad }">
                  <svg v-if="f.icon" class="ic ball" viewBox="0 0 16 16" v-html="icons[f.icon]"></svg>
                  <span>{{ f.value }}</span>
                  <svg class="chev" width="10" height="6" viewBox="0 0 10 6"><path d="M1 .8l4 4 4-4" fill="none" stroke="currentColor" stroke-width="1.300" /></svg>
                </div>
                <span v-if="f.off" class="help">?</span>
              </div>
              <svg class="red-note" width="110" height="34" viewBox="0 0 110 34"><text class="caption" x="4" y="24.500" textLength="94">设置外观</text></svg>
              <div class="legendline"><span>Number annotation</span><i></i></div>
              <div class="annot">
                <div class="show"><span class="dcb"><svg width="11" height="11" viewBox="0 0 11 11"><path d="M1 5.500l3 3L10 2" fill="none" stroke="#333" stroke-width="1.400" /></svg></span><span>Show</span></div>
                <div class="annot-fields">
                  <div class="field short"><label>Color</label>
                    <div class="select"><span>As points</span><svg class="chev" width="10" height="6" viewBox="0 0 10 6"><path d="M1 .8l4 4 4-4" fill="none" stroke="currentColor" stroke-width="1.300" /></svg></div>
                  </div>
                  <div class="field short"><label>Font:</label>
                    <div class="select narrow pad"><span>100</span><svg class="chev" width="10" height="6" viewBox="0 0 10 6"><path d="M1 .8l4 4 4-4" fill="none" stroke="currentColor" stroke-width="1.300" /></svg></div>
                    <span class="dcb two"></span><span>2D</span>
                  </div>
                </div>
              </div>
            </div>
          </div>
          <div class="dfoot">
            <div class="dbtn"><svg class="ic" viewBox="0 0 16 16" v-html="icons.tick"></svg>Apply</div>
            <div class="dbtn"><svg class="ic" viewBox="0 0 16 16" v-html="icons.tick"></svg>OK</div>
            <div class="dbtn"><svg class="ic" viewBox="0 0 16 16" v-html="icons.redx"></svg>Cancel</div>
          </div>
          <svg class="resize" width="9" height="9" viewBox="0 0 9 9"><path d="M6 0h2v2H6zM3 3h2v2H3zM6 3h2v2H6zM0 6h2v2H0zM3 6h2v2H3zM6 6h2v2H6z" fill="#b8b8b8" /></svg>
          <div class="redbox"></div>
        </div>
      </section>

      <aside class="right">
        <div class="side">
          <div v-for="(s, n) in sideTools" :key="n" class="stool" :class="{ on: s.on }" :style="{ height: s.h + 'px' }">
            <svg v-if="s.icon" class="ic" viewBox="0 0 16 16" v-html="icons[s.icon]"></svg>
            <span v-else class="hgrip"></span>
          </div>
        </div>
        <div class="handle"><i></i></div>
      </aside>
    </main>
    <svg class="ember" width="24" height="7" viewBox="0 0 24 7"><path d="M0 5L20 0l2 2 1 5h-4l-1-2-13 2H2z" fill="#ff6a3a" /></svg>
  </div>
</template>

<style>
html, body { margin: 0; background: #000; overflow: hidden; }
</style>

<style scoped>
.app { position: relative; width: 2560px; height: 1370px; display: flex; flex-direction: column; overflow: hidden; background: linear-gradient(90deg, #a0bef5, #c4daf9); font: 12px 'Liberation Mono', 'DejaVu Sans Mono', monospace; letter-spacing: -1.2px; color: #000; box-sizing: border-box; }
.app * { box-sizing: border-box; }
.ic { width: 16px; height: 16px; flex: none; display: block; letter-spacing: 0; overflow: visible; }
.grip, .dots { width: 3px; height: 16px; flex: none; background: repeating-linear-gradient(180deg, #2c4a8c 0 2px, #dce8fb 2px 3px, transparent 3px 4px); }
.menubar { height: 27px; border-top: 3px solid #848484; display: flex; align-items: center; flex: none; padding-left: 3px; }
.menubar .app-ic { margin: 0 7px 2px 5px; width: 14px; height: 14px; }
.menubar nav { display: flex; flex: 1; font: 12.5px 'Noto Sans', 'Open Sans', sans-serif; letter-spacing: -0.1px; margin-top: 1px; }
.menubar nav span { display: block; white-space: nowrap; }
.winctl { margin: 0 3px 2px 0; }
.toolrow { height: 26px; flex: none; display: flex; border-bottom: 1px solid #7f9fd8; }
.toolbar { display: flex; height: 25px; width: 1092px; align-items: center; padding-bottom: 1px; background: linear-gradient(180deg, #dbe8fd 0%, #c2d7f7 50%, #88abe4 100%); border-radius: 0 3px 3px 0; font-family: 'Noto Sans', sans-serif; letter-spacing: 0; }
.tool { height: 22px; flex: none; display: flex; align-items: center; justify-content: center; }
.tool.grip { background: none; }
.tool.on { background: linear-gradient(180deg, #ffd391, #ffad63); border: 1px solid #00007c; }
.tool.sep { background: linear-gradient(#6a8ccb, #6a8ccb) right 3px center / 1px 16px no-repeat; }
.tri { width: 0; height: 0; border: 4.500px solid transparent; border-top: 5px solid #333; border-bottom: 0; margin-top: 2px; }
.tri.small { border-width: 4px 3.500px 0; border-top-color: #000; }
.tool.combo { background: #fff; justify-content: space-between; }
.tool.combo b { font: 12.5px 'Noto Sans', sans-serif; padding-left: 3px; letter-spacing: -.2px; }
.tool.combo em { width: 13px; height: 19px; margin-right: 1px; background: linear-gradient(#dce8fc, #a6c2f0); display: flex; align-items: center; justify-content: center; }

.work { flex: 1; display: flex; min-height: 0; }
.left { position: relative; width: 200px; flex: none; display: flex; flex-direction: column; background: #cfdff9; }
.panel { display: flex; flex-direction: column; }
.panel.input { height: 1031px; border-bottom: 1px solid #00007c; }
.panel.windows { flex: 1; }
.phead { height: 22px; flex: none; display: flex; align-items: center; padding-left: 3px; background: linear-gradient(180deg, #dbe8fd, #86aae5); }
.panel.windows .phead { height: 23px; }
.phead .ic { margin: 0 1px 0 4px; }
.phead strong { flex: 1; font-size: 11.5px; font-family: 'DejaVu Sans Mono', monospace; letter-spacing: 0; }
.pctl { margin-right: 4px; }
.tree { flex: 1; margin-top: 2px; background: #fff; border: 1px solid #7d8494; display: flex; flex-direction: column; min-height: 0; overflow: hidden; }
.rows { flex: 1; padding-top: 1px; margin-left: -1px; overflow: hidden; }
.row { height: 18px; display: flex; align-items: center; white-space: nowrap; }
.lead { position: relative; width: 19px; height: 18px; flex: none; display: flex; align-items: center; }
.lead::before { content: ''; position: absolute; left: 10px; top: 0; width: 1px; height: 18px; background: repeating-linear-gradient(180deg, #999 0 1px, transparent 1px 2px); }
.lead.none::before { display: none; }
.lead.upper::before { height: 9px; }
.lead.lower::before { top: 9px; height: 9px; }
.lead.own::after { content: ''; position: absolute; left: 11px; top: 9px; width: 8px; height: 1px; background: repeating-linear-gradient(90deg, #999 0 1px, transparent 1px 2px); }
.exp { position: relative; z-index: 1; width: 9px; height: 9px; margin-left: 6px; border: 1px solid #7b8797; background: linear-gradient(#27408b, #27408b) center / 5px 1px no-repeat, linear-gradient(#27408b, #27408b) center / 1px 5px no-repeat, #f4f5f7; }
.exp.minus { background: linear-gradient(#27408b, #27408b) center / 5px 1px no-repeat, #f4f5f7; }
.slot { width: 18px; height: 18px; flex: none; display: flex; align-items: center; justify-content: center; }
.slot.cbs { width: 20px; justify-content: flex-start; padding-left: 4px; }
.cb { width: 13px; height: 13px; border: 1px solid #86a3bf; display: flex; align-items: center; justify-content: center; }
.cb svg { flex: none; }
.cb.grey { background: linear-gradient(135deg, #dcdfe3, #f4f5f6); }
.cb.yellow { background: #fdfcbe; }
.cb.peach { background: linear-gradient(135deg, #f9cfa8, #fde6cd); }
.cb.radio { border-radius: 50%; border-color: #7b8797; background: radial-gradient(circle, #7d5a8c 0 2.500px, #f1efb5 3.200px); }
.label { padding-left: 3px; line-height: 16px; font-size: 12px; letter-spacing: -1.2px; }
.label.it { font-style: italic; }
.label.bd { font-weight: bold; letter-spacing: -.2px; }
.label.tight { letter-spacing: -.8px; }
.label.sel { background: #c9c9ea; padding-left: 2px; margin-left: 1px; padding-right: 6px; }
.hscroll { height: 15px; margin-bottom: 1px; background: #f0f0f0; display: flex; flex: none; }
.hscroll .thumb { width: 141px; background: #cdcdcd; }
.hscroll svg:last-child { margin-left: auto; }
.ptabs { height: 22px; flex: none; margin-top: 2px; display: flex; padding-left: 3px; background: #cfdff9; }
.windows .ptabs { margin-top: 3px; height: 21px; }
.ptab { width: 48.500px; height: 20px; display: flex; align-items: center; padding-left: 2px; background: linear-gradient(180deg, #c6daf9, #86aae5); border-right: 1px solid #00007c; }
.ptab span { padding-left: 1px; font-family: 'Liberation Serif', serif; letter-spacing: 2.600px; font-size: 12px; white-space: nowrap; }
.ptab.active { background: linear-gradient(180deg, #eaf2ff, #a9c6f3); border-bottom: 1px solid #000; border-right-color: #000; }
.mark { position: absolute; left: -2px; top: 325px; width: 156px; height: 32px; border: 1px solid #f00; box-shadow: 3px 3px 4px rgba(0, 0, 0, .3), inset 2px 2px 3px rgba(0, 0, 0, .15); }
.split { width: 5px; flex: none; border: solid #00007c; border-width: 0 1px; background: #c8d9fa; }

.view { position: relative; width: 2328px; flex: none; margin-bottom: 1px; background: #000; border: solid; border-width: 4px 4px 4px 5px; border-color: #6e6e6e #e8e8e8 #e8e8e8 #777; border-style: ridge; }
.scene { display: block; }
.crisp { shape-rendering: crispEdges; }
.depth { font-family: 'Liberation Sans', sans-serif; font-weight: bold; fill: #f0f; letter-spacing: 0; }
.caption { font-family: 'Noto Sans CJK SC', sans-serif; font-size: 23.500px; letter-spacing: 0; fill: #f21c1c; stroke: #fff; stroke-width: 2.500px; paint-order: stroke; filter: drop-shadow(1px 2px 1px rgba(110, 110, 110, .8)); }

.dialog { position: absolute; left: 31px; top: 304px; width: 366px; height: 498px; background: #f0f0f0; border: 1px solid #1c1c1c; display: flex; flex-direction: column; }
.dtitle { height: 30px; flex: none; background: #000; color: #fff; display: flex; align-items: center; padding: 0 9px 0 7px; font: 12.500px 'Noto Sans', sans-serif; letter-spacing: 0; }
.dtitle span { flex: 1; margin-left: 10px; }
.dtabs { display: flex; align-items: flex-end; height: 22px; padding-left: 3px; margin-top: 3px; flex: none; }
.dtab { height: 20px; border: 1px solid #dadada; border-bottom: 0; background: #f0f0f0; display: flex; align-items: center; padding-left: 2px; flex: none; }
.dtab span { flex: 1; padding-left: 6px; }
.dtab.wide span { padding-left: 8px; }
.dtab.cur { height: 22px; background: #fff; padding-bottom: 2px; margin-bottom: -1px; }
.dtab.cur span { padding-left: 8px; }
.page { margin: 0 3px; height: 410px; background: #fff; border: solid #dadada; border-width: 1px 1px 0; padding: 5px 7px 6px 7px; flex: none; display: flex; flex-direction: column; }
.btnrow { display: flex; height: 20px; align-items: center; gap: 4px; }
.ibtn { width: 22px; height: 20px; background: #e1e1e1; border: 1px solid #adadad; display: flex; align-items: center; justify-content: center; }
.dcb { width: 13px; height: 13px; border: 1px solid #333; background: #fff; display: flex; align-items: center; justify-content: center; flex: none; }
.btnrow .dcb { margin-left: 30px; }
.dtabs.sub { margin-top: 26px; padding-left: 0; }
.dtabs.sub .dtab:not(.cur) span { padding-left: 7px; }
.subpage { width: 343px; flex: 1; border: solid #dadada; border-width: 1px 1px 0; padding: 3px 0 0 7px; }
.field { display: flex; align-items: flex-start; padding-left: 17px; }
.field label { width: 79px; line-height: 21px; white-space: nowrap; }
.select { width: 204px; height: 19px; border: 1px solid #7a7a7a; background: #fff; display: flex; align-items: center; padding: 0 4px 0 4px; color: #000; }
.select span { flex: 1; }
.select .chev { color: #444; }
.select.pad { padding-left: 10px; }
.select .ball { width: 14px; height: 14px; margin: 0 8px 0 2px; }
.select.off { border-color: #ccc; color: #6d6d6d; background: linear-gradient(#efefef, #efefef) 1px 1px / 183px 15px no-repeat #fff; }
.select.off .chev { color: #b5b5b5; }
.help { width: 20px; height: 18px; margin-left: 6px; background: linear-gradient(135deg, #a8d4f4, #1a7fd6); border: 1px solid #7aa6cc; color: #fff; font: bold 15px/16px 'Liberation Sans', sans-serif; text-align: center; letter-spacing: 0; }
.red-note { display: block; margin: 11px 0 0 121px; }
.legendline { display: flex; align-items: center; height: 14px; margin-top: 7px; }
.legendline i { flex: 1; margin-right: 8px; height: 1px; background: #a0a0a0; margin-bottom: 2px; }
.annot { display: flex; margin-top: 10px; }
.show { display: flex; align-items: center; gap: 5px; width: 63px; height: 43px; }
.annot-fields { display: flex; flex-direction: column; gap: 4px; }
.field.short { padding-left: 0; height: 19px; }
.field.short label { width: 33px; }
.select.narrow { width: 127px; }
.dcb.two { margin: 2px 4px 0; }
.field.short .dcb + span { line-height: 18px; }
.dfoot { display: flex; gap: 8px; padding: 4px 0 0 101px; }
.dbtn { width: 73px; height: 20px; background: #e1e1e1; border: 1px solid #adadad; display: flex; align-items: center; padding-left: 5px; gap: 3px; }
.dbtn .ic { width: 13px; height: 13px; }
.resize { position: absolute; right: 1px; bottom: 1px; }
.redbox { position: absolute; left: -4px; top: 122px; width: 372px; height: 288px; border: 1px solid #f00; box-shadow: 2px 3px 4px rgba(0, 0, 0, .25), inset 2px 3px 4px rgba(0, 0, 0, .15); }

.right { position: relative; flex: 1; display: flex; flex-direction: column; padding-left: 1px; background: #c4daf9; }
.side { height: 198px; padding-left: 2px; background: linear-gradient(90deg, #dbe8fd, #86aae5); border-radius: 3px; border-right: 1px solid #4a6cb4; }
.stool { display: flex; align-items: center; justify-content: center; width: 22px; }
.stool.on { border: 1px solid #00007c; background: linear-gradient(180deg, #ffd391, #ffad63); }
.hgrip { width: 16px; height: 3px; background: repeating-linear-gradient(90deg, #2c4a8c 0 2px, #dce8fb 2px 3px, transparent 3px 4px); }
.handle { position: absolute; right: 0; top: 723px; width: 10px; height: 60px; background: #3a3f4b; border-radius: 4px 0 0 4px; display: flex; align-items: flex-end; justify-content: center; padding-bottom: 6px; }
.handle i { width: 4px; height: 6px; background: #6ea08c; }
.ember { position: absolute; left: 2464px; top: 1364px; }
</style>
